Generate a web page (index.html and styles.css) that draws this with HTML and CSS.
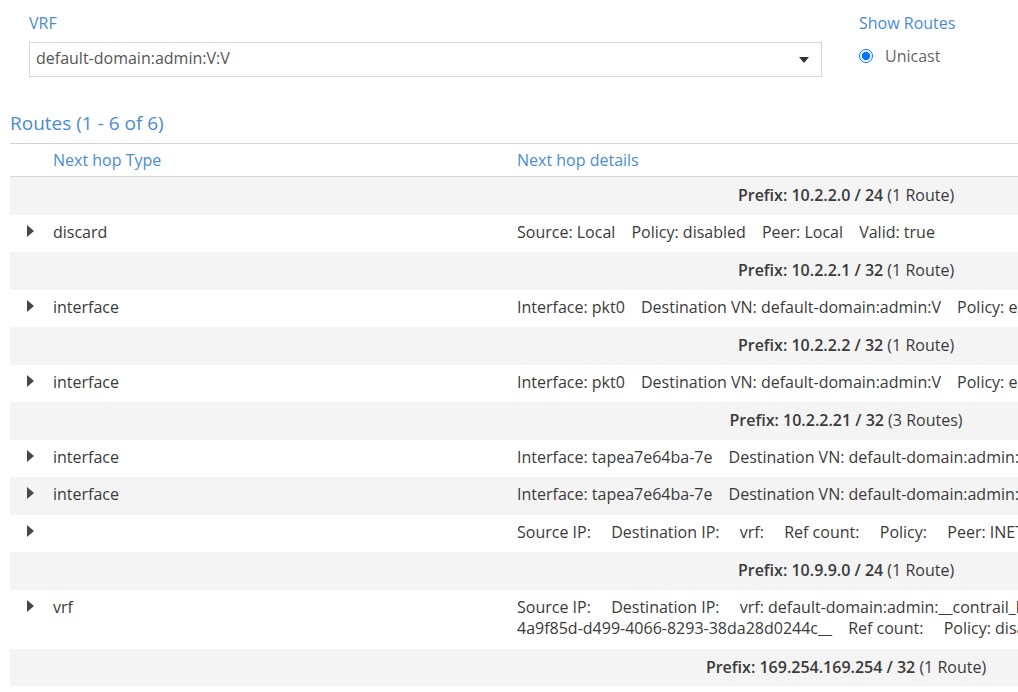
FILE: index.html
```html
<!DOCTYPE html>
<html lang="en">
<head>
<meta charset="utf-8">
<title>Routes</title>
<link rel="stylesheet" href="styles.css">
</head>
<body>
<div class="filters">
  <div class="vrf-col">
    <div class="field-label">VRF</div>
    <div class="select">
      <span class="select-text">default-domain:admin:V:V</span>
      <span class="caret"></span>
    </div>
  </div>
  <div class="routes-col">
    <div class="field-label">Show Routes</div>
    <label class="radio-row"><input type="radio" name="rt" checked class="radio"><span class="radio-text">Unicast</span></label>
  </div>
</div>

<div class="title">Routes (1 - 6 of 6)</div>

<div class="grid-wrap">
<table class="grid">
  <colgroup><col class="c-arrow"><col class="c-type"><col class="c-details"></colgroup>
  <thead>
    <tr><th></th><th>Next hop Type</th><th>Next hop details</th></tr>
  </thead>
  <tbody>
    <tr class="prefix"><td colspan="3"><b>Prefix: 10.2.2.0 / 24</b> (1 Route)</td></tr>
    <tr><td><span class="arrow"></span></td><td>discard</td><td><span class="kv">Source: Local</span> <span class="kv">Policy: disabled</span> <span class="kv">Peer: Local</span> <span class="kv">Valid: true</span></td></tr>
    <tr class="prefix"><td colspan="3"><b>Prefix: 10.2.2.1 / 32</b> (1 Route)</td></tr>
    <tr><td><span class="arrow"></span></td><td>interface</td><td><span class="kv">Interface: pkt0</span> <span class="kv">Destination VN: default-domain:admin:V</span> <span class="kv">Policy: enabled</span> <span class="kv">Peer: Local</span> <span class="kv">Valid: true</span></td></tr>
    <tr class="prefix"><td colspan="3"><b>Prefix: 10.2.2.2 / 32</b> (1 Route)</td></tr>
    <tr><td><span class="arrow"></span></td><td>interface</td><td><span class="kv">Interface: pkt0</span> <span class="kv">Destination VN: default-domain:admin:V</span> <span class="kv">Policy: enabled</span> <span class="kv">Peer: Local</span> <span class="kv">Valid: true</span></td></tr>
    <tr class="prefix"><td colspan="3"><b>Prefix: 10.2.2.21 / 32</b> (3 Routes)</td></tr>
    <tr><td><span class="arrow"></span></td><td>interface</td><td><span class="kv">Interface: tapea7e64ba-7e</span> <span class="kv">Destination VN: default-domain:admin:V</span> <span class="kv">Policy: enabled</span> <span class="kv">Peer: LocalVmPort</span> <span class="kv">Valid: true</span></td></tr>
    <tr><td><span class="arrow"></span></td><td>interface</td><td><span class="kv">Interface: tapea7e64ba-7e</span> <span class="kv">Destination VN: default-domain:admin:V</span> <span class="kv">Policy: enabled</span> <span class="kv">Peer: LocalVmPort</span> <span class="kv">Valid: true</span></td></tr>
    <tr><td><span class="arrow"></span></td><td></td><td><span class="kv">Source IP:&nbsp;</span> <span class="kv">Destination IP:&nbsp;</span> <span class="kv">vrf:&nbsp;</span> <span class="kv">Ref count:&nbsp;</span> <span class="kv">Policy:&nbsp;</span> <span class="kv">Peer: INET</span> <span class="kv">Valid: true</span></td></tr>
    <tr class="prefix"><td colspan="3"><b>Prefix: 10.9.9.0 / 24</b> (1 Route)</td></tr>
    <tr><td><span class="arrow"></span></td><td>vrf</td><td><span class="kv">Source IP:&nbsp;</span> <span class="kv">Destination IP:&nbsp;</span> <span class="kv">vrf: default-domain:admin:__contrail_lr_internal_vn_e<br>4a9f85d-d499-4066-8293-38da28d0244c__</span> <span class="kv">Ref count:&nbsp;</span> <span class="kv">Policy: disabled</span> <span class="kv">Peer: Local</span> <span class="kv">Valid: true</span></td></tr>
    <tr class="prefix"><td colspan="3"><b>Prefix: 169.254.169.254 / 32</b> (1 Route)</td></tr>
  </tbody>
</table>
</div>
</body>
</html>
```

FILE: styles.css
```css
html, body {
  margin: 0;
  padding: 0;
  overflow: hidden;
  background: #ffffff;
}
body {
  font-family: "Open Sans", "Liberation Sans", sans-serif;
  font-size: 16px;
  color: #3a3a3a;
  width: 1018px;
  height: 692px;
}
.filters {
  display: flex;
  padding-top: 12px;
}
.vrf-col {
  width: 793px;
  margin-left: 29px;
}
.routes-col {
  margin-left: 37px;
}
.field-label {
  color: #4b8bd1;
  line-height: 22px;
  margin-bottom: 8px;
}
.select {
  box-sizing: border-box;
  height: 35px;
  border: 1px solid #d6d6d6;
  display: flex;
  align-items: center;
  justify-content: space-between;
  padding: 0 12px 3px 6px;
  color: #555;
}
.caret {
  width: 0;
  height: 0;
  margin-top: 3px;
  border-left: 5px solid transparent;
  border-right: 5px solid transparent;
  border-top: 6px solid #333;
}
.radio-row {
  display: flex;
  align-items: center;
  padding-top: 3px;
  line-height: 22px;
}
.radio {
  margin: 0 12px 0 0;
  width: 14px;
  height: 14px;
}
.radio-text {
  color: #666;
}
.title {
  margin: 33px 0 0 10px;
  font-size: 19px;
  line-height: 26px;
  color: #4b8bd1;
  height: 33px;
}
.grid-wrap {
  margin-left: 10px;
  overflow: hidden;
}
.grid {
  width: 1672px;
  border-collapse: collapse;
  table-layout: fixed;
}
.c-arrow { width: 35px; }
.c-type { width: 464px; }
.grid th {
  text-align: left;
  font-weight: normal;
  color: #4b8bd1;
  padding: 5px 8px;
  line-height: 22px;
  border-top: 1px solid #d4d4d4;
  border-bottom: 1px solid #d4d4d4;
}
.grid td {
  padding: 7px 8px 9px;
  line-height: 21.5px;
  vertical-align: top;
  white-space: normal;
}
.grid td:first-child {
  padding-left: 17px;
  padding-right: 0;
}
.grid tbody tr:nth-child(odd) {
  background: #f4f4f4;
}
.grid tr.prefix td {
  text-align: center;
  padding: 8px;
}
.grid tr.prefix b {
  font-weight: 600;
}
.kv {
  margin-right: 12px;
}
.arrow {
  display: block;
  width: 0;
  height: 0;
  margin-top: 3px;
  border-top: 6px solid transparent;
  border-bottom: 6px solid transparent;
  border-left: 7px solid #474747;
}
```
